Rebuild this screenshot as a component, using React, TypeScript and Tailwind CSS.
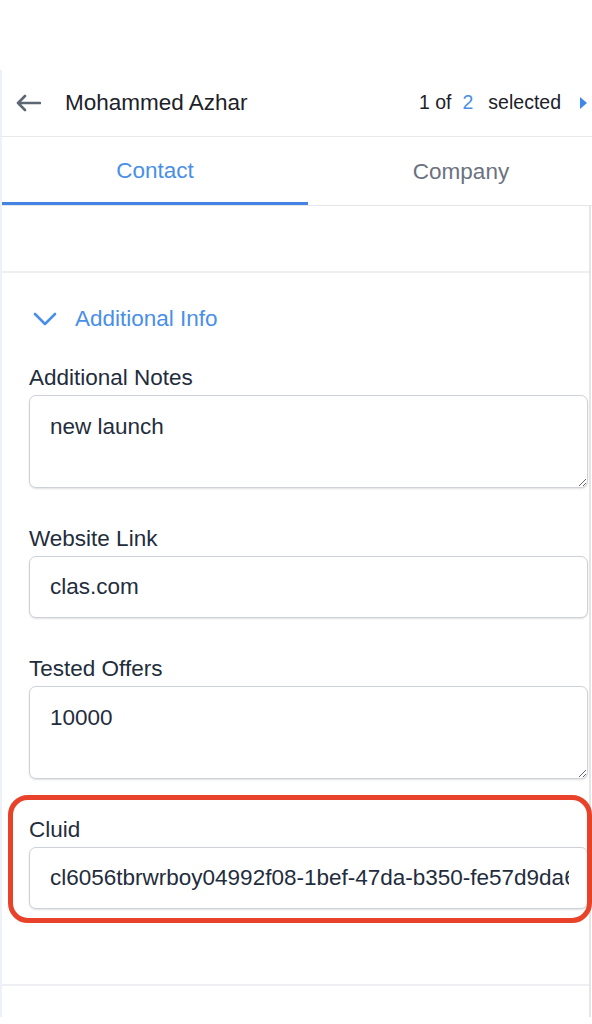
import React from "react";

const font = { fontFamily: '"Liberation Sans", Arial, sans-serif' };

function Field({ label, value, multiline }: { label: string; value: string; multiline?: boolean }) {
  return (
    <div className="flex flex-col">
      <div className="h-[24px] text-[22.5px] leading-[24px] text-[#1f2d3d]">{label}</div>
      {multiline ? (
        <textarea
          readOnly
          defaultValue={value}
          className="mt-[5px] h-[93px] w-full rounded-[7px] border border-[#cdd2da] bg-white pl-[20px] pr-3 pt-[19px] text-[22.5px] leading-[24px] text-[#1f2d3d] shadow-[0_1px_2px_rgba(0,0,0,0.12)] outline-none resize-y"
          style={font}
        />
      ) : (
        <input
          readOnly
          defaultValue={value}
          className="mt-[5px] h-[62px] w-full rounded-[7px] border border-[#cdd2da] bg-white pl-[20px] pr-[18px] text-[22.5px] text-[#1f2d3d] shadow-[0_1px_2px_rgba(0,0,0,0.12)] outline-none"
          style={font}
        />
      )}
    </div>
  );
}

export default function App() {
  return (
    <div className="w-[592px] h-[1024px] overflow-hidden bg-white" style={font}>
      <div className="h-[70px]" />
      <div className="flex h-[947px]">
        <div className="w-[2px] bg-[#eef2f8]" />
        <div className="flex-1 flex flex-col min-w-0">
          {/* Header */}
          <div className="h-[67px] flex items-center border-b border-[#e6e8ec] pl-[13px] pr-[5px]">
            <svg width="26" height="18" viewBox="0 0 26 18" className="shrink-0">
              <path d="M25 9H3M10 2L3 9l7 7" fill="none" stroke="#5d6773" strokeWidth="2.6" strokeLinecap="round" strokeLinejoin="round" />
            </svg>
            <div className="ml-[24px] text-[22.5px] text-[#1c2128] leading-none">Mohammed Azhar</div>
            <div className="ml-auto flex items-center text-[19.5px] text-[#1c2128] leading-none">
              <span>1 of</span>
              <span className="ml-[11px] text-[#4a8fe7]">2</span>
              <span className="ml-[15px]">selected</span>
              <svg width="7" height="12" viewBox="0 0 7 12" className="ml-[19px]">
                <path d="M0 0L7 6L0 12Z" fill="#3f87ea" />
              </svg>
            </div>
          </div>
          {/* Tabs */}
          <div className="h-[69px] flex border-b-[1px] border-[#e5e7eb] w-[612px]">
            <div className="w-[306px] h-full flex items-center justify-center border-b-[3px] border-[#4283e4] -mb-[1px] pt-[2px] text-[22.5px] text-[#4a8fe7]">
              Contact
            </div>
            <div className="w-[306px] h-full flex items-center justify-center pt-[2px] text-[22.5px] text-[#6b7280]">
              Company
            </div>
          </div>
          {/* Body */}
          <div className="flex-1 flex flex-col border-r-2 border-[#e6e6e6] mr-[1px]">
            <div className="h-[67px] border-b-2 border-[#eeeff3]" />
            <div className="pl-[27px] pr-[1px] h-[713px] border-b-2 border-[#eeeff3]">
              <div className="mt-[34px] h-[24px] flex items-center">
                <svg width="24" height="14" viewBox="0 0 24 14" className="ml-[4px]">
                  <path d="M2 2l10 10L22 2" fill="none" stroke="#4a8fe7" strokeWidth="2.6" strokeLinecap="round" strokeLinejoin="round" />
                </svg>
                <span className="ml-[18px] text-[22.5px] text-[#4a8fe7] leading-none">Additional Info</span>
              </div>
              <div className="mt-[35px] flex flex-col gap-[39px]">
                <Field label="Additional Notes" value="new launch" multiline />
                <Field label="Website Link" value="clas.com" />
                <Field label="Tested Offers" value="10000" multiline />
                <div className="relative">
                  <Field label="Cluid" value="cl6056tbrwrboy04992f08-1bef-47da-b350-fe57d9da6c21" />
                  <div className="pointer-events-none absolute left-[-21px] top-[-23px] w-[584px] h-[128px] rounded-[20px] border-[5px] border-[#e8432a]" />
                </div>
              </div>
            </div>
            <div className="flex-1" />
          </div>
        </div>
      </div>
    </div>
  );
}
